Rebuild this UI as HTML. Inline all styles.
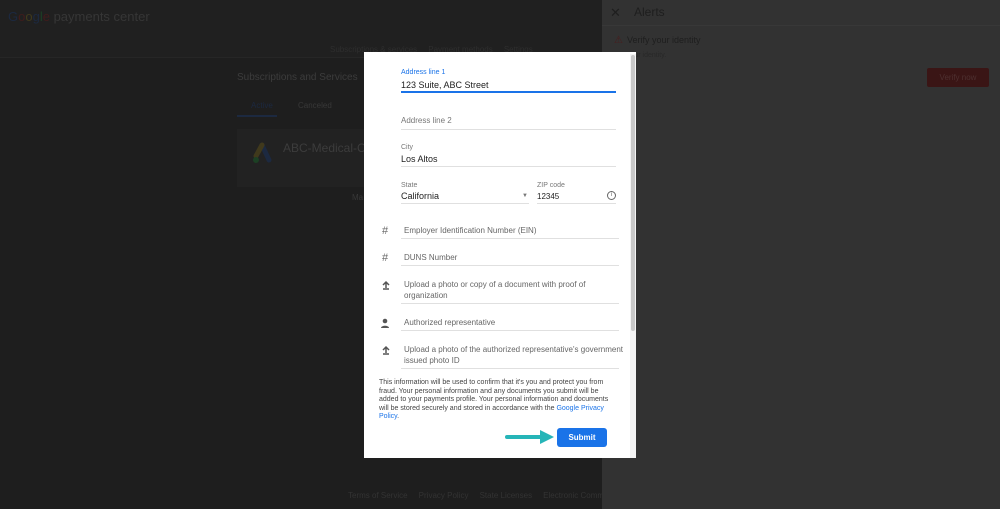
<!DOCTYPE html>
<html><head><meta charset="utf-8"><style>
*{margin:0;padding:0;box-sizing:border-box}
html,body{width:1000px;height:509px;overflow:hidden;background:#1e1e1e}
body{font-family:"Liberation Sans",Arial,sans-serif;position:relative}
.a{position:absolute;white-space:nowrap}
.dim{color:#383838}
#bg{position:absolute;left:0;top:0;width:1000px;height:509px;background:#1e1e1e}
#right{position:absolute;left:602px;top:0;width:398px;height:509px;background:#323232}
#modal{position:absolute;left:364px;top:52px;width:272px;height:406px;background:#fff}
.lbl{font-size:7px;color:#777}
.val{font-size:9px;color:#222}
.line{position:absolute;height:1px;background:#e0e0e0}
.ph{font-size:8px;color:#666;white-space:normal;line-height:11px}
.ic{font-size:11px;color:#666}
</style></head><body>
<div id="bg"></div>
<div class="a" style="left:0;top:0;width:602px;height:58px;background:#202020;border-bottom:1px solid #262626"></div>
<div class="a" style="left:8px;top:9px;font-size:13px;color:#363636"><span style="color:#1c2940">G</span><span style="color:#401c1c">o</span><span style="color:#40391c">o</span><span style="color:#1c2940">g</span><span style="color:#1c4024">l</span><span style="color:#401c1c">e</span> payments center</div>
<div class="a dim" style="left:330px;top:45px;font-size:8px;color:#2e2e2e">Subscriptions &amp; services &nbsp;&nbsp;&nbsp; Payment methods &nbsp;&nbsp;&nbsp; Settings</div>
<div class="a" style="left:237px;top:72px;font-size:10px;color:#3c3c3c">Subscriptions and Services</div>
<div class="a" style="left:251px;top:101px;font-size:8px;color:#1c2940">Active</div>
<div class="a dim" style="left:298px;top:101px;font-size:8px">Canceled</div>
<div class="a" style="left:237px;top:115px;width:40px;height:2px;background:#1c2940"></div>
<div class="a" style="left:237px;top:129px;width:130px;height:58px;background:#222"></div>
<div class="a" style="left:252px;top:142px;width:20px;height:22px">
<svg width="20" height="22"><path d="M10 3 L17 18" stroke="#1c2940" stroke-width="5" stroke-linecap="round"/><path d="M10 3 L4 14" stroke="#40391c" stroke-width="5" stroke-linecap="round"/><circle cx="4" cy="18" r="3" fill="#1c4024"/></svg></div>
<div class="a" style="left:283px;top:141px;font-size:12px;color:#3c3c3c">ABC-Medical-Co</div>
<div class="a dim" style="left:352px;top:193px;font-size:8px">Ma</div>
<div class="a dim" style="left:348px;top:491px;font-size:8px;color:#333">Terms of Service &nbsp;&nbsp;&nbsp; Privacy Policy &nbsp;&nbsp;&nbsp; State Licenses &nbsp;&nbsp;&nbsp; Electronic Commun</div>
<div id="right">
<div class="a" style="left:0;top:0;width:398px;height:26px;border-bottom:1px solid #383838"></div>
<div class="a" style="left:8px;top:5px;font-size:13px;color:#1e1e1e">✕</div>
<div class="a" style="left:32px;top:5px;font-size:12px;color:#1e1e1e">Alerts</div>
<div class="a" style="left:12px;top:35px;font-size:10px;color:#4a1c1c">⚠</div>
<div class="a" style="left:25px;top:35px;font-size:9px;color:#1e1e1e">Verify your identity</div>
<div class="a" style="left:25px;top:52px;font-size:7px;color:#282828">your identity.</div>
<div class="a" style="left:325px;top:68px;width:62px;height:19px;background:#3a1515;border-radius:2px;font-size:8px;text-align:center;line-height:19px;color:#4e3030">Verify now</div>
</div>
<div id="modal">
<div class="a" style="left:266px;top:2px;width:6px;height:404px;background:#f4f4f4"></div>
<div class="a" style="left:267px;top:3px;width:4px;height:276px;background:#c8c8c8;border-radius:2px"></div>
<div class="a lbl" style="left:37px;top:17px;color:#1a73e8">Address line 1</div>
<div class="a val" style="left:37px;top:28px">123 Suite, ABC Street</div>
<div class="a" style="left:37px;top:39px;width:215px;height:2px;background:#1a73e8"></div>
<div class="a" style="left:37px;top:64px;font-size:8px;color:#777">Address line 2</div>
<div class="line" style="left:37px;top:77px;width:215px"></div>
<div class="a lbl" style="left:37px;top:92px">City</div>
<div class="a val" style="left:37px;top:102px">Los Altos</div>
<div class="line" style="left:37px;top:114px;width:215px"></div>
<div class="a lbl" style="left:37px;top:130px">State</div>
<div class="a val" style="left:37px;top:139px">California</div>
<div class="a" style="left:158px;top:141px;font-size:6px;color:#777">▼</div>
<div class="line" style="left:37px;top:151px;width:128px"></div>
<div class="a lbl" style="left:173px;top:130px">ZIP code</div>
<div class="a val" style="left:173px;top:140px;font-size:8px">12345</div>
<div class="a" style="left:243px;top:139px;width:9px;height:9px;border:1px solid #666;border-radius:50%;font-size:6px;text-align:center;line-height:7px;color:#666">i</div>
<div class="line" style="left:173px;top:151px;width:79px"></div>
<div class="a ic" style="left:18px;top:173px">#</div>
<div class="a ph" style="left:40px;top:173px">Employer Identification Number (EIN)</div>
<div class="line" style="left:37px;top:186px;width:218px"></div>
<div class="a ic" style="left:18px;top:200px">#</div>
<div class="a ph" style="left:40px;top:200px">DUNS Number</div>
<div class="line" style="left:37px;top:213px;width:218px"></div>
<svg class="a" style="left:17px;top:228px" width="10" height="10"><path d="M2 9h6M5 8V3M2 5l3-3 3 3" stroke="#555" stroke-width="1.5" fill="none"/></svg>
<div class="a ph" style="left:40px;top:227px;width:210px">Upload a photo or copy of a document with proof of organization</div>
<div class="line" style="left:37px;top:251px;width:218px"></div>
<svg class="a" style="left:16px;top:266px" width="10" height="10"><circle cx="5" cy="3" r="2.3" fill="#555"/><path d="M1 10c0-3 8-3 8 0z" fill="#555"/></svg>
<div class="a ph" style="left:40px;top:265px">Authorized representative</div>
<div class="line" style="left:37px;top:278px;width:218px"></div>
<svg class="a" style="left:17px;top:293px" width="10" height="10"><path d="M2 9h6M5 8V3M2 5l3-3 3 3" stroke="#555" stroke-width="1.5" fill="none"/></svg>
<div class="a ph" style="left:40px;top:292px;width:220px">Upload a photo of the authorized representative's government issued photo ID</div>
<div class="line" style="left:37px;top:316px;width:218px"></div>
<div class="a" style="left:15px;top:327px;width:240px;white-space:normal;font-size:7px;line-height:8.5px;color:#444">This information will be used to confirm that it's you and protect you from fraud. Your personal information and any documents you submit will be added to your payments profile. Your personal information and documents will be stored securely and stored in accordance with the <span style="color:#1a73e8">Google Privacy Policy</span>.</div>
<svg class="a" style="left:140px;top:377px" width="52" height="16"><path d="M3 8H40" stroke="#26b5b8" stroke-width="4" stroke-linecap="round"/><path d="M36 1L50 8L36 15Z" fill="#26b5b8"/></svg>
<div class="a" style="left:193px;top:376px;width:50px;height:19px;background:#1a73e8;border-radius:3px;color:#fff;font-size:8px;font-weight:bold;text-align:center;line-height:19px">Submit</div>
</div>
</body></html>
